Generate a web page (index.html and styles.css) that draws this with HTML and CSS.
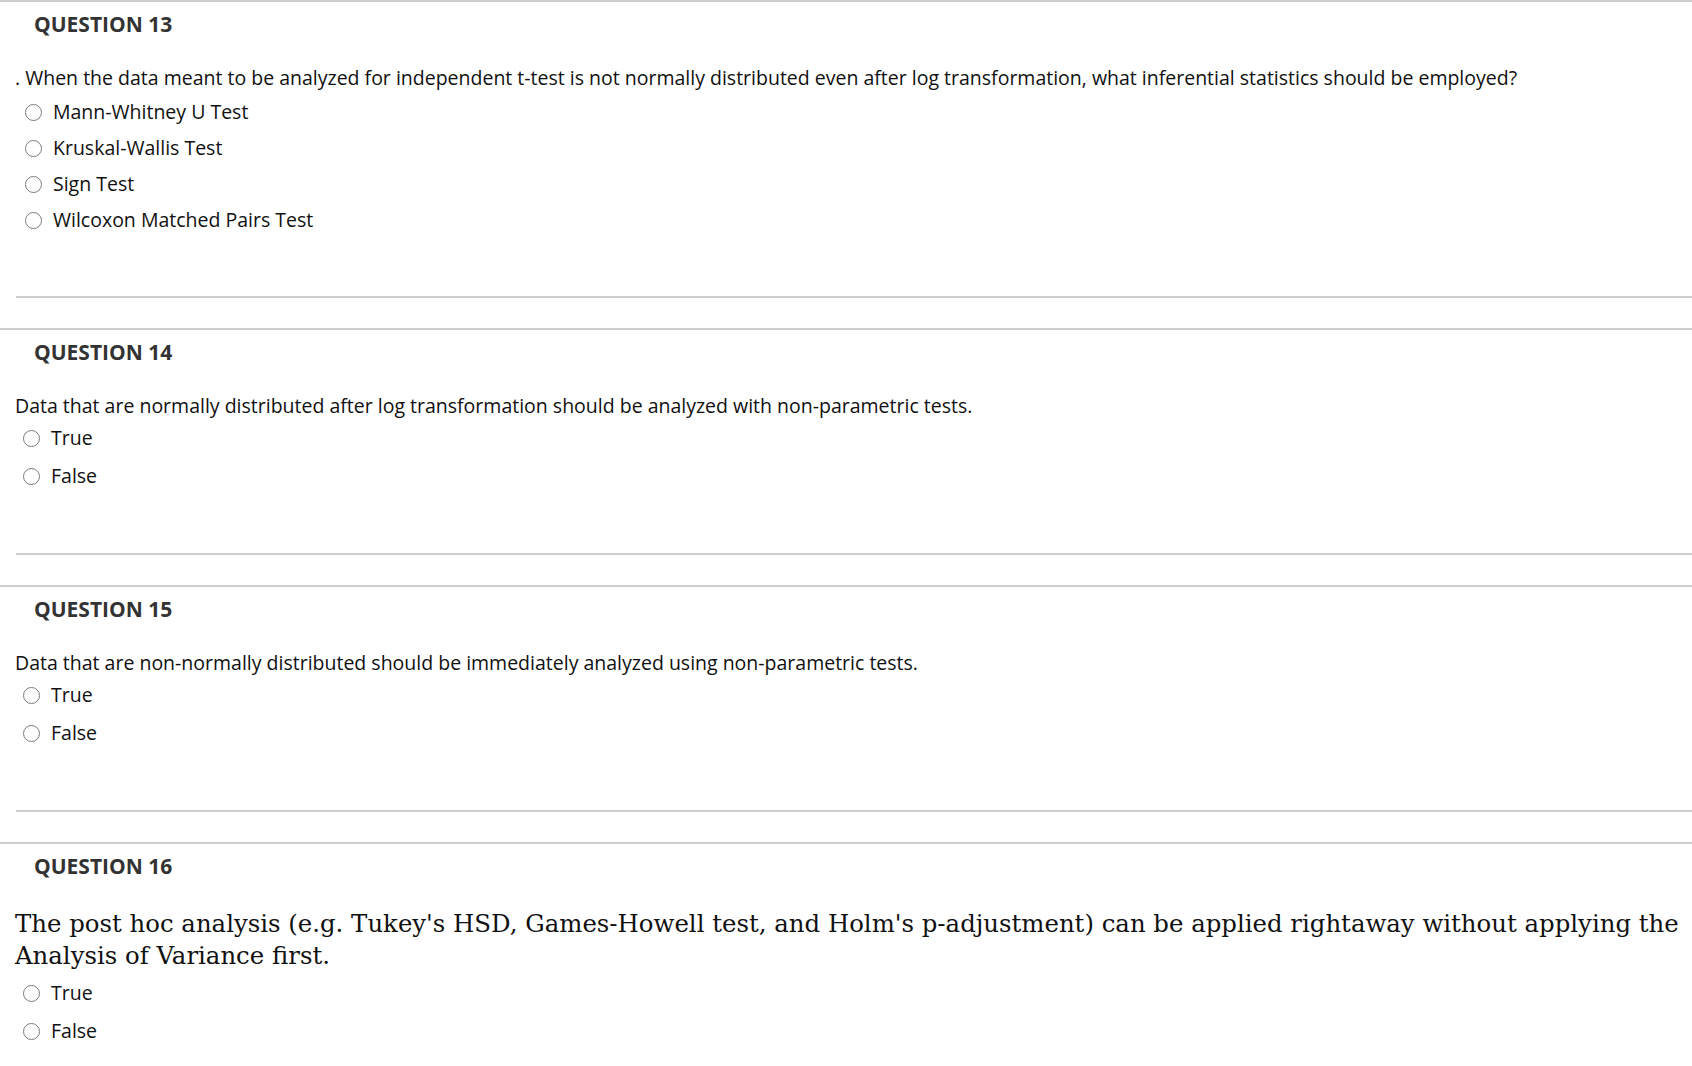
FILE: index.html
```html
<!DOCTYPE html>
<html lang="en">
<head>
<meta charset="utf-8">
<title>Questions</title>
<link rel="stylesheet" href="styles.css">
</head>
<body>
<div class="question">
  <h3 class="q-title">QUESTION 13</h3>
  <p class="q-text">. When the data meant to be analyzed for independent t-test is not normally distributed even after log transformation, what inferential statistics should be employed?</p>
  <ul class="answers answers-mc">
    <li class="answer"><span class="radio"></span><span class="label">Mann-Whitney U Test</span></li>
    <li class="answer"><span class="radio"></span><span class="label">Kruskal-Wallis Test</span></li>
    <li class="answer"><span class="radio"></span><span class="label">Sign Test</span></li>
    <li class="answer"><span class="radio"></span><span class="label">Wilcoxon Matched Pairs Test</span></li>
  </ul>
  <div class="q-foot"></div>
</div>
<div class="question">
  <h3 class="q-title">QUESTION 14</h3>
  <p class="q-text">Data that are normally distributed after log transformation should be analyzed with non-parametric tests.</p>
  <ul class="answers answers-tf">
    <li class="answer"><span class="radio"></span><span class="label">True</span></li>
    <li class="answer"><span class="radio"></span><span class="label">False</span></li>
  </ul>
  <div class="q-foot"></div>
</div>
<div class="question">
  <h3 class="q-title">QUESTION 15</h3>
  <p class="q-text">Data that are non-normally distributed should be immediately analyzed using non-parametric tests.</p>
  <ul class="answers answers-tf">
    <li class="answer"><span class="radio"></span><span class="label">True</span></li>
    <li class="answer"><span class="radio"></span><span class="label">False</span></li>
  </ul>
  <div class="q-foot"></div>
</div>
<div class="question">
  <h3 class="q-title">QUESTION 16</h3>
  <p class="q-text q-text-serif">The post hoc analysis (e.g. Tukey's HSD, Games-Howell test, and Holm's p-adjustment) can be applied rightaway without applying the Analysis of Variance first.</p>
  <ul class="answers answers-tf answers-tight">
    <li class="answer"><span class="radio"></span><span class="label">True</span></li>
    <li class="answer"><span class="radio"></span><span class="label">False</span></li>
  </ul>
</div>
</body>
</html>
```

FILE: styles.css
```css
html, body {
  margin: 0;
  padding: 0;
  background: #ffffff;
}

body {
  font-family: "Open Sans", "Noto Sans", "Liberation Sans", sans-serif;
  color: #111111;
  width: 1692px;
  overflow: hidden;
}

.question {
  border-top: 2px solid #cecece;
  padding-bottom: 30px;
}

.q-title {
  margin: 0;
  padding: 10px 0 0 34px;
  font-size: 21px;
  line-height: 24px;
  font-weight: 700;
  color: #333333;
}

.q-text {
  margin: 30px 0 0 0;
  padding: 0 0 0 15px;
  font-size: 19.5px;
  line-height: 24px;
  color: #111111;
}

.q-text-serif {
  font-family: "DejaVu Serif", "Liberation Serif", serif;
  font-size: 24.4px;
  line-height: 32px;
  padding-right: 0;
  color: #111111;
}

.answers {
  list-style: none;
  margin: 0;
  padding: 0;
}

.answers-mc {
  margin-top: 4px;
  padding-left: 25px;
}

.answers-mc .answer {
  height: 36px;
}

.answers-tf {
  margin-top: 1px;
  padding-left: 23px;
}

.answers-tight {
  margin-top: 2px;
}

.answers-tf .answer {
  height: 38px;
}

.answer {
  display: flex;
  align-items: center;
  gap: 11px;
}

.radio {
  flex: none;
  box-sizing: border-box;
  width: 17px;
  height: 17px;
  border: 1.5px solid #7a7a7a;
  border-radius: 50%;
  background: #ffffff;
}

.label {
  font-size: 19.5px;
  line-height: 24px;
  color: #111111;
}

.q-foot {
  margin: 58px 0 0 16px;
  border-top: 2px solid #cecece;
}
```
